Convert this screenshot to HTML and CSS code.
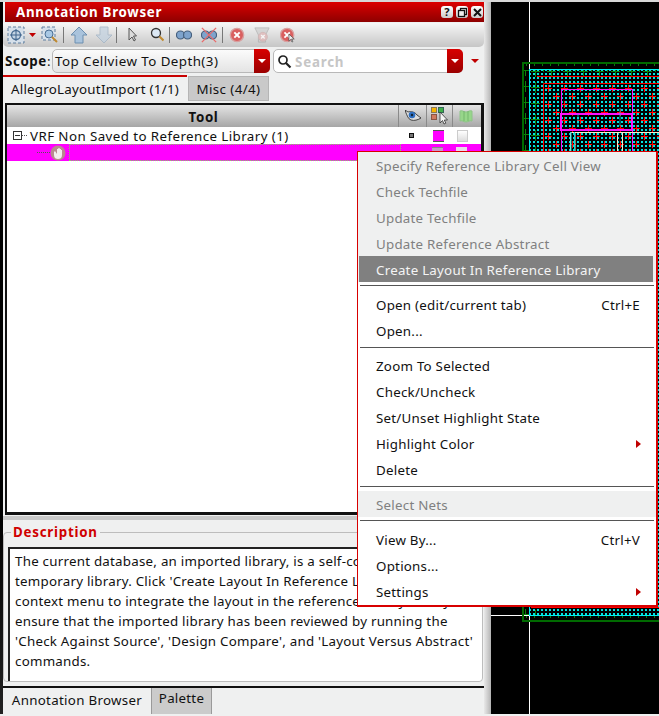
FILE: index.html
```html
<!DOCTYPE html>
<html lang="en">
<head>
<meta charset="utf-8">
<title>Annotation Browser</title>
<link rel="stylesheet" href="styles.css">
</head>
<body>
<div class="app">
  <div class="topstrip"></div>
  <div class="main">
    <div class="edge"></div>
    <div class="dock">
      <div class="titlebar">
        <span class="title">Annotation Browser</span>
        <div class="winbtns">
          <span class="winbtn">?</span>
          <span class="winbtn"><svg width="11" height="11" viewBox="0 0 11 11"><rect x="3.5" y="1.5" width="6" height="6" fill="none" stroke="#111" stroke-width="1.3"/><rect x="1.5" y="3.5" width="6" height="6" fill="#eee" stroke="#111" stroke-width="1.3"/></svg></span>
          <span class="winbtn"><svg width="11" height="11" viewBox="0 0 11 11"><path d="M2 2l7 7M9 2l-7 7" stroke="#111" stroke-width="2"/></svg></span>
        </div>
      </div>
      <div class="toolbar">
        <svg class="ti w18" viewBox="0 0 18 18"><rect x="1" y="1" width="16" height="16" fill="#d6e0ea" stroke="#5f7f9f" stroke-dasharray="3 2"/><circle cx="9" cy="9" r="4.5" fill="#c4d4e4" stroke="#4a6f95" stroke-width="1.3"/><path d="M9 3v12M3 9h12" stroke="#3f658c"/></svg>
        <svg class="ti w9 ml3" viewBox="0 0 9 18"><path d="M1 7h7l-3.500 4z" fill="#c00000"/></svg>
        <svg class="ti w18 ml4" viewBox="0 0 18 18"><rect x="1" y="1" width="13" height="13" fill="#d6e0ea" stroke="#5f7f9f" stroke-dasharray="3 2"/><circle cx="8" cy="8" r="4" fill="#a8c8e4" stroke="#4a6f95"/><path d="M11 11l5 5" stroke="#c08a30" stroke-width="2"/></svg>
        <span class="tsep ml4"></span>
        <svg class="ti w18 ml6" viewBox="0 0 18 18"><path d="M9 1l8 8h-4v8H5V9H1z" fill="#a9c3dc" stroke="#6d8fb0"/></svg>
        <svg class="ti w18 ml7 faded" viewBox="0 0 18 18"><path d="M9 17l8-8h-4V1H5v8H1z" fill="#c3d2e0" stroke="#9fb2c4"/></svg>
        <span class="tsep ml3"></span>
        <svg class="ti w10 ml10" viewBox="0 0 10 18"><path d="M2 2v12l3-3 2 4 1.500-1-2-4h3z" fill="#dcdcdc" stroke="#555"/></svg>
        <svg class="ti w14 ml13" viewBox="0 0 14 18"><circle cx="6" cy="7" r="4.500" fill="#dce8f4" stroke="#333" stroke-width="1.300"/><path d="M9.500 10.500l4 4" stroke="#c08a30" stroke-width="2.200"/></svg>
        <span class="tsep ml5"></span>
        <svg class="ti w16 ml6" viewBox="0 0 18 18"><circle cx="5" cy="9" r="4.500" fill="#7ea3cc" stroke="#455f7d" stroke-width="1.300"/><circle cx="13" cy="9" r="4.500" fill="#7ea3cc" stroke="#455f7d" stroke-width="1.300"/></svg>
        <svg class="ti w16 ml9" viewBox="0 0 18 18"><circle cx="5" cy="9" r="4.500" fill="#7ea3cc" stroke="#455f7d" stroke-width="1.300"/><circle cx="13" cy="9" r="4.500" fill="#7ea3cc" stroke="#455f7d" stroke-width="1.300"/><path d="M1 1l16 16M17 1L1 17" stroke="#e86a6a" stroke-width="1.500"/></svg>
        <span class="tsep ml5"></span>
        <svg class="ti w16 ml6" viewBox="0 0 18 18"><circle cx="9" cy="9" r="7.500" fill="#d95f5f" stroke="#d8a0a0" stroke-width="1.500"/><path d="M6 6l6 6M12 6l-6 6" stroke="#fff" stroke-width="2.200"/></svg>
        <svg class="ti w16 ml9 faded" viewBox="0 0 18 18"><path d="M1 1h16l-4 8v8H5V9z" fill="#cfcfcf" stroke="#aaa"/><circle cx="10" cy="11" r="5" fill="#e0b6b6" stroke="#caa"/><path d="M8 9l4 4M12 9l-4 4" stroke="#fff" stroke-width="1.500"/></svg>
        <svg class="ti w16 ml10" viewBox="0 0 18 18"><circle cx="8" cy="9" r="7.500" fill="#d95f5f" stroke="#d8a0a0" stroke-width="1.500"/><path d="M5 6l6 6M11 6l-6 6" stroke="#fff" stroke-width="2"/><path d="M10 8v8l2-2 1.500 3 1-.7-1.500-2.800h3z" fill="#eee" stroke="#333" stroke-width=".7"/></svg>
      </div>
      <div class="scoperow">
        <span class="scopelabel"><b>Scope</b>:</span>
        <div class="combo combo-scope">
          <span class="combotext">Top Cellview To Depth(3)</span>
          <span class="combobtn"><i></i></span>
        </div>
        <div class="combo combo-search">
          <svg class="searchicon" width="15" height="15" viewBox="0 0 15 15"><circle cx="6" cy="6" r="4" fill="#fff" stroke="#222" stroke-width="1.700"/><path d="M9 9l4.500 4.500" stroke="#222" stroke-width="2.200"/></svg>
          <span class="searchtext">Search</span>
          <span class="combobtn"><i></i></span>
        </div>
        <span class="drop"></span>
      </div>
      <div class="tabs">
        <span class="tab tab-on">AllegroLayoutImport (1/1)</span>
        <span class="tab tab-off">Misc (4/4)</span>
      </div>
      <div class="treeframe">
        <div class="theader">
          <span class="hcol hcol-tool">Tool</span>
          <span class="hcol hcol-a"><svg width="16" height="12" viewBox="0 0 16 12"><path d="M0 0l3 2c3-1 7 0 9 3l4 3c-3 2-7 3-10 2C3 9 2 5 1 3z" fill="#ddd" stroke="#222" stroke-width=".8"/><circle cx="7" cy="5" r="3.300" fill="#2f6fc0"/><circle cx="7" cy="5" r="1.200" fill="#123"/></svg></span>
          <span class="hcol hcol-b"><svg width="18" height="18" viewBox="0 0 18 18"><rect x=".5" y=".5" width="5" height="5" fill="#f6b400" stroke="#875"/><rect x="7.500" y=".5" width="5" height="5" fill="#3fae4a" stroke="#365"/><rect x=".5" y="7.500" width="5" height="5" fill="#cf7a5e" stroke="#854"/><path d="M9 5v11l2.500-2.500 1.500 3.500 1.800-.8-1.500-3.200h3.200z" fill="#f4f4f4" stroke="#333" stroke-width=".8"/></svg></span>
          <span class="hcol hcol-c"><svg width="14" height="14" viewBox="0 0 14 14"><path d="M1 2c3-1 3 1 6 1s3-2 6-1v10c-3-1-3 1-6 1s-3-2-6-1z" fill="#97d68a" stroke="#8ec488"/><path d="M5 2v10M9 2v10" stroke="#5fa55a" opacity=".6"/></svg></span>
        </div>
        <div class="trow">
          <svg class="expander" width="14" height="9" viewBox="0 0 14 9"><rect x=".5" y=".5" width="8" height="8" fill="#fff" stroke="#333"/><path d="M2 4.500h5" stroke="#333"/><path d="M9 4.500h5" stroke="#555" stroke-dasharray="1 1"/></svg>
          <span class="tlabel">VRF Non Saved to Reference Library (1)</span>
          <span class="mark mark-dot"></span>
          <span class="mark mark-color"></span>
          <span class="mark mark-check"></span>
        </div>
        <div class="trow trow-sel">
          <span class="dotline"></span>
          <svg class="hand" width="16" height="16" viewBox="0 0 16 16"><circle cx="8" cy="8" r="7.500" fill="#b98a8f"/><path d="M4 7v3c0 3 2 4 4 4s4-1 4-4V5h-1v3V4H9.700v4-5H8.300v5-4H7v5L5 6z" fill="#f4eeee"/></svg>
          <span class="selbox"></span>
          <span class="mark mark-grey"></span>
          <span class="mark mark-check2"></span>
        </div>
        <div class="tfill"></div>
      </div>
      <div class="splitter"></div>
      <fieldset class="desc">
        <legend class="desclegend">Description</legend>
        <div class="desctext">The current database, an imported library, is a self-contained<br>temporary library. Click 'Create Layout In Reference Library' in the<br>context menu to integrate the layout in the reference library. Always<br>ensure that the imported library has been reviewed by running the<br>'Check Against Source', 'Design Compare', and 'Layout Versus Abstract'<br>commands.</div>
      </fieldset>
      <div class="bottomtabs">
        <span class="btab btab-on">Annotation Browser</span>
        <span class="btab btab-off">Palette</span>
      </div>
    </div>
    <div class="sash"></div>
    <div class="canvas">
      <svg class="layout" width="168" height="712" viewBox="491 2 168 712">
        <defs>
          <pattern id="dots" x="0" y="0" width="4" height="4" patternUnits="userSpaceOnUse"><rect x="1" y="1" width="2" height="2" fill="#00e0e0"/></pattern>
          <pattern id="crosses" x="544" y="84" width="16" height="16" patternUnits="userSpaceOnUse"><path d="M4.500 1v7M1 4.500h7M12.500 9v7M9 12.500h7" stroke="#ff0000"/></pattern>
          <pattern id="gx" x="522" y="62" width="8" height="8" patternUnits="userSpaceOnUse"><path d="M4.500 0v4" stroke="#0a7a0a"/></pattern>
          <pattern id="gplus" x="523" y="65" width="16" height="16" patternUnits="userSpaceOnUse"><path d="M2.500 0v11M-2 5.500h9" stroke="#0a800a"/></pattern>
          <pattern id="gplus2" x="530" y="66" width="16" height="16" patternUnits="userSpaceOnUse"><path d="M5.500 0v11M1 5.500h9M13.500 0v6" stroke="#0a800a"/></pattern>
        </defs>
        <rect x="491" y="2" width="168" height="712" fill="#000"/>
        <path d="M529.500 2V714M491 615.500H529" stroke="#fff"/>
        <rect x="523" y="63" width="140" height="558" fill="none" stroke="#006a00" stroke-width="2"/>
        <rect x="524" y="64" width="136" height="5" fill="url(#gx)"/>
        <rect x="524" y="616" width="136" height="5" fill="url(#gx)"/>
        <rect x="524" y="70" width="5" height="545" fill="url(#gplus)"/>
        <rect x="529" y="69" width="135" height="547" fill="url(#dots)"/>
        <path d="M529.500 69V616M529 69.500H659M530 615.500H659" stroke="#00f0f0"/>
        <rect x="531" y="70" width="128" height="13" fill="url(#gplus2)"/>
        <rect x="531" y="83" width="12" height="532" fill="url(#gplus2)"/>
        <rect x="544" y="84" width="115" height="68" fill="url(#crosses)"/>
        <path d="M537 76.500H659" stroke="#ff0000" stroke-width="1"/>
        <path d="M543.500 160V83.500H659" fill="none" stroke="#ff0000"/>
        <rect x="561.500" y="89.500" width="71" height="40" fill="none" stroke="#ff10ff"/>
        <rect x="561" y="114" width="71" height="16" fill="none" stroke="#ff10ff" stroke-width="2"/>
        <path d="M561.500 130V160M632.500 130V160" stroke="#ff10ff"/>
        <path d="M570.500 160V132.500H659M575 160V132M617.500 160V132M622.500 160V132" stroke="#ffe9c8" fill="none"/>
        <path d="M574.500 132V160M571 132V160" stroke="#00e0e0"/>
        <path d="M578 126V114M620 126V108" stroke="#00e0e0" opacity=".7"/>
        <path d="M531 607.500H659" stroke="#ff0000"/>
      </svg>
    </div>
  </div>
  <div class="botstrip"></div>

  <div class="menu">
    <div class="mgroup">
      <div class="mi mi-off">Specify Reference Library Cell View</div>
      <div class="mi mi-off">Check Techfile</div>
      <div class="mi mi-off">Update Techfile</div>
      <div class="mi mi-off">Update Reference Abstract</div>
      <div class="mi mi-hl">Create Layout In Reference Library</div>
    </div>
    <div class="msep"></div>
    <div class="mi"><span>Open (edit/current tab)</span><span class="key">Ctrl+E</span></div>
    <div class="mi">Open...</div>
    <div class="msep msep-l"></div>
    <div class="mi">Zoom To Selected</div>
    <div class="mi">Check/Uncheck</div>
    <div class="mi">Set/Unset Highlight State</div>
    <div class="mi"><span>Highlight Color</span><span class="sub"></span></div>
    <div class="mi">Delete</div>
    <div class="msep msep-l"></div>
    <div class="mgroup"><div class="mi mi-off">Select Nets</div></div>
    <div class="msep"></div>
    <div class="mi"><span>View By...</span><span class="key">Ctrl+V</span></div>
    <div class="mi">Options...</div>
    <div class="mi"><span>Settings</span><span class="sub"></span></div>
  </div>
</div>
</body>
</html>
```
FILE: styles.css
```css
* { box-sizing: border-box; }
html, body { margin: 0; padding: 0; background: #eff0f0; }
body { font-family: "Noto Sans", "Open Sans", sans-serif; font-size: 13.33px; letter-spacing: .24px; color: #111; }
.app { position: relative; width: 659px; height: 716px; overflow: hidden; display: flex; flex-direction: column; background: #eff0f0; }
.topstrip { height: 2px; background: #d8d8d8; flex: none; }
.botstrip { height: 2px; background: #eff0f0; flex: none; }
.main { flex: 1; display: flex; min-height: 0; }
.edge { width: 3px; flex: none; background: linear-gradient(#000 0, #000 72%, #222 100%); }
.dock { width: 481px; flex: none; display: flex; flex-direction: column; min-height: 0; }
.sash { width: 7px; flex: none; background: linear-gradient(90deg, #e8e8e8, #d4d4d4 40%, #b4b4b4); }
.canvas { flex: 1; background: #000; overflow: hidden; }
.layout { display: block; }

.titlebar { height: 20px; margin-left: 2px; flex: none; display: flex; align-items: center; justify-content: space-between; background: linear-gradient(#dc0000, #b00000 55%, #8e0000); padding: 0 1px 0 11px; }
.title { color: #fff; font-weight: 700; font-size: 13.33px; letter-spacing: .7px; line-height: 20px; }
.winbtns { display: flex; gap: 3px; }
.winbtn { width: 12px; height: 12px; border-radius: 3px; background: linear-gradient(#fff, #ccc); color: #111; font-size: 11px; font-weight: 700; line-height: 12px; text-align: center; display: flex; align-items: center; justify-content: center; }

.toolbar { height: 24px; margin-top: 1px; flex: none; display: flex; align-items: center; padding-left: 4px; background: linear-gradient(#f6f6f6, #c6c6c6); border-radius: 0 0 5px 5px; }
.ti { height: 18px; flex: none; display: block; }
.w18 { width: 18px; } .w16 { width: 16px; } .w14 { width: 14px; } .w10 { width: 10px; } .w9 { width: 9px; }
.faded { opacity: .75; }
.ml3 { margin-left: 3px; } .ml4 { margin-left: 4px; } .ml5 { margin-left: 5px; } .ml6 { margin-left: 6px; } .ml7 { margin-left: 7px; } .ml9 { margin-left: 9px; } .ml10 { margin-left: 10px; } .ml13 { margin-left: 13px; }
.tsep { width: 1px; height: 16px; flex: none; background: #777; }

.scoperow { height: 28px; flex: none; display: flex; align-items: center; padding-left: 2px; }
.scopelabel { width: 47px; flex: none; }
.scopelabel b { font-weight: 700; letter-spacing: .6px; }
.combo { height: 24px; flex: none; display: flex; align-items: center; border: 1px solid #b8b8b8; border-radius: 5px; background: linear-gradient(#fbfbfb, #e4e4e4); position: relative; }
.combo-scope { width: 218px; padding-left: 2px; }
.combotext { flex: 1; white-space: nowrap; letter-spacing: .45px; }
.combo-search { width: 190px; margin-left: 3px; background: #fff; padding-left: 3px; }
.searchicon { flex: none; }
.searchtext { flex: 1; margin-left: 3px; padding-top: 2px; color: #c6c6c6; font-weight: 700; letter-spacing: .8px; }
.combobtn { width: 16px; height: 24px; margin: -1px -1px -1px 0; flex: none; background: linear-gradient(#d80000, #9a0000); border-radius: 0 5px 5px 0; display: flex; align-items: center; justify-content: center; }
.combobtn i { display: block; width: 0; height: 0; border-left: 4px solid transparent; border-right: 4px solid transparent; border-top: 4px solid #fff; }
.drop { width: 0; height: 0; margin-left: 8px; border-left: 4px solid transparent; border-right: 4px solid transparent; border-top: 4px solid #c00000; }

.tabs { height: 28px; flex: none; display: flex; align-items: flex-end; padding-bottom: 2px; }
.tab { display: block; white-space: nowrap; text-align: center; }
.tab-on { width: 184px; height: 26px; border-top: 2px solid #c80000; line-height: 24px; background: #eff0f0; }
.tab-off { width: 81px; height: 25px; margin-left: 1px; background: #c9c9c9; border: 1px solid #b5b5b5; line-height: 24px; letter-spacing: .4px; }

.treeframe { height: 412px; margin-left: 2px; flex: none; border: 2px solid #111; border-bottom-width: 3px; border-right-width: 3px; background: #fff; display: flex; flex-direction: column; overflow: hidden; }
.theader { height: 22px; flex: none; display: flex; background: linear-gradient(#e4e4e4, #a6a6a6); }
.hcol { display: flex; align-items: center; justify-content: center; flex: none; border-left: 1px solid #8a8a8a; }
.hcol-tool { width: 391px; border-left: 0; padding: 1px 0 0 2px; font-weight: 700; letter-spacing: .6px; }
.hcol-a { width: 28px; }
.hcol-b { width: 26px; }
.hcol-c { width: 27px; }
.trow { height: 17px; flex: none; display: flex; align-items: center; position: relative; }
.expander { margin-left: 6px; flex: none; }
.tlabel { margin-left: 3px; width: 368px; height: 17px; padding-top: 1px; flex: none; letter-spacing: .42px; line-height: 17px; white-space: nowrap; }
.mark { display: block; flex: none; }
.mark-dot { width: 5px; height: 5px; margin-left: 11px; background: #777; border: 1px solid #111; }
.mark-color { width: 11px; height: 12px; margin-left: 19px; background: #ff00ff; border-top: 1px solid #555; border-bottom: 1px solid #555; }
.mark-check { width: 11px; height: 12px; margin-left: 13px; background: linear-gradient(#fff, #ddd); border: 1px solid #ccc; }
.trow-sel { background: #ff00ff; }
.dotline { width: 13px; margin-left: 30px; flex: none; border-top: 1px dotted #555; align-self: center; }
.hand { flex: none; }
.selbox { width: 332px; height: 17px; margin-left: 3px; flex: none; border: 1px dotted #7fdc5a; }
.mark-grey { width: 11px; height: 12px; margin-left: 31px; background: #c89ac8; border-top: 1px solid #888; }
.mark-check2 { width: 11px; height: 12px; margin-left: 13px; background: #ead8ea; }
.tfill { flex: 1; background: #fff; }
.splitter { height: 4px; margin-top: 1px; flex: none; background: #c8c8c8; }

.desc { flex: none; height: 158px; margin: 4px 1px 0 0; padding: 0 0 0 4px; border: 1px solid #bdbdbd; border-radius: 4px; min-width: 0; overflow: hidden; }
.desclegend { padding: 0 2px; margin-left: 3px; color: #d00000; font-weight: 700; letter-spacing: .75px; line-height: 16px; }
.desctext { margin-top: 7px; height: 134px; padding: 2px 5px 0 5px; background: #fff; border-top: 2px solid #222; border-left: 2px solid #222; line-height: 20px; white-space: nowrap; overflow: hidden; }

.bottomtabs { flex: none; height: 28px; margin-top: 4px; border-top: 2px solid #111; display: flex; }
.btab { display: block; line-height: 24px; text-align: center; height: 26px; }
.btab-on { width: 148px; background: #eff0f0; letter-spacing: .3px; }
.btab-off { width: 61px; background: #cbcbcb; border-left: 1px solid #9a9a9a; border-right: 1px solid #9a9a9a; line-height: 21px; }

.menu { position: absolute; left: 357px; top: 151px; width: 301px; height: 456px; background: #fff; border: 1px solid #d80000; border-width: 1px 2px 2px 1px; }
.mgroup { background: #eff0f0; padding: 0; }
.mi { height: 26px; display: flex; align-items: center; justify-content: space-between; padding: 2px 16px 0 18px; white-space: nowrap; color: #111; }
.mi-off { color: #808080; }
.mi-hl { background: #808080; color: #f4f4f4; margin: 0 3px 0 1px; padding-left: 17px; }
.key { margin-left: auto; }
.sub { width: 0; height: 0; margin-right: -1px; border-top: 4px solid transparent; border-bottom: 4px solid transparent; border-left: 5px solid #c00000; }
.msep { height: 9px; padding-top: 3px; }
.msep::before { content: ""; display: block; height: 1px; margin: 0 2px 0 2px; background: #555; }
.msep-l { padding-top: 4px; }
```
